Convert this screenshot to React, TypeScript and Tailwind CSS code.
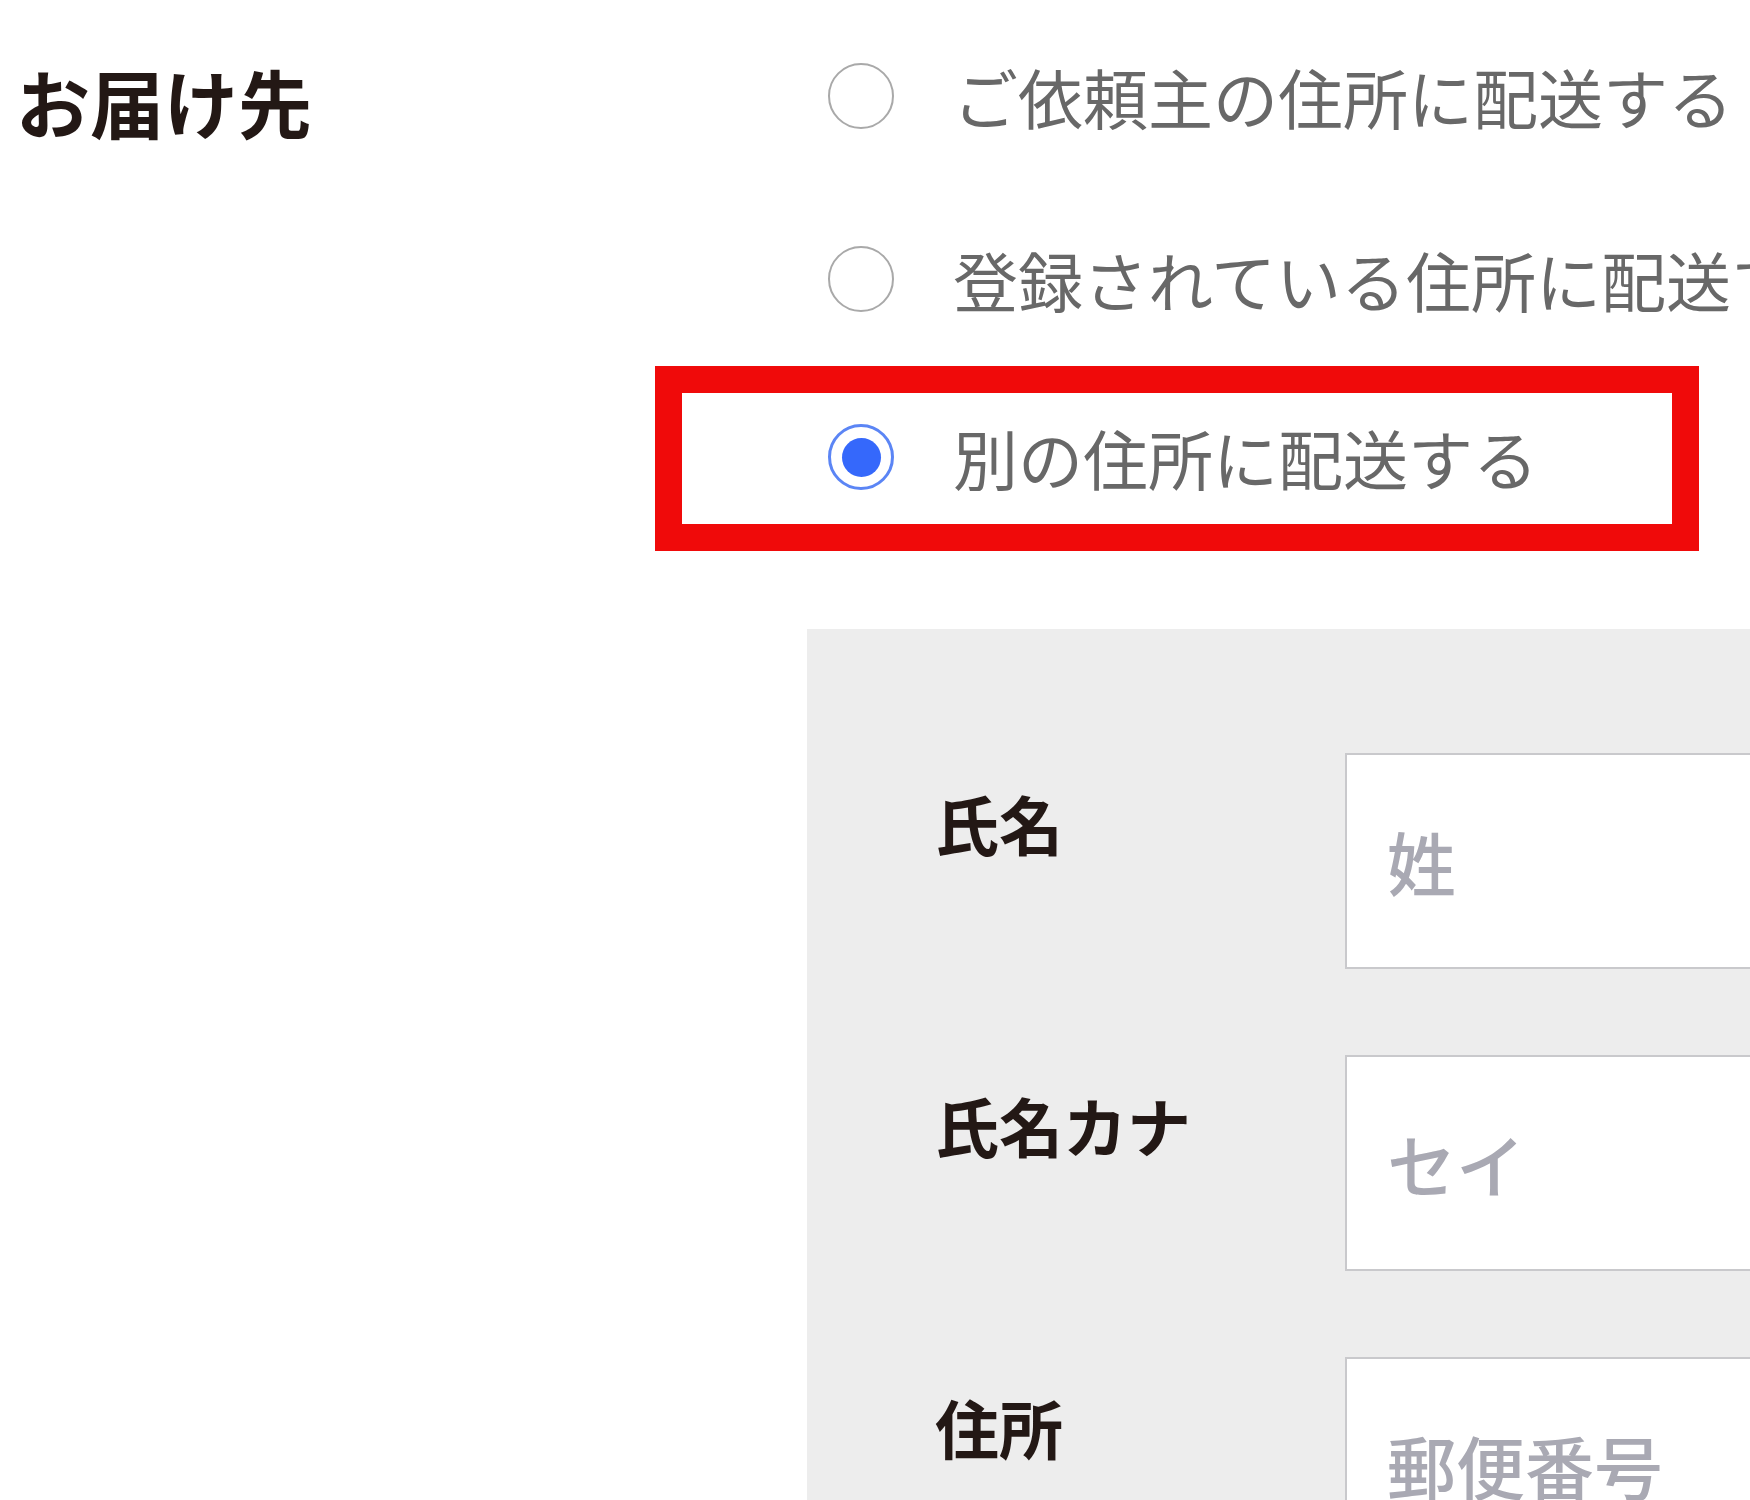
import React from "react";

const font = "font-['Noto_Sans_CJK_JP','Noto_Sans',sans-serif]";

function Radio({ checked }: { checked?: boolean }) {
  if (checked) {
    return (
      <div className="w-[66px] h-[66px] shrink-0 rounded-full border-[3px] border-[#5b85f5] bg-white flex items-center justify-center">
        <div className="w-[39px] h-[39px] rounded-full bg-[#3568fb]" />
      </div>
    );
  }
  return <div className="w-[66px] h-[66px] shrink-0 rounded-full border-2 border-[#a9a9a9] bg-white" />;
}

function Option({ label, checked, className }: { label: string; checked?: boolean; className?: string }) {
  return (
    <div className={"relative flex items-center h-[66px] " + (className ?? "")}>
      {checked && (
        <div className="absolute left-[-173px] top-[-58px] w-[1044px] h-[185px] border-[27px] border-[#f00a0a] pointer-events-none" />
      )}
      <Radio checked={checked} />
      <span className="ml-[59px] whitespace-nowrap text-[65px] leading-none font-normal text-[#686868]">{label}</span>
    </div>
  );
}

function Field({ label, placeholder, className }: { label: string; placeholder: string; className?: string }) {
  return (
    <div className={"flex " + (className ?? "")}>
      <div className="w-[410px] shrink-0 pt-[37px] text-[64px] leading-none font-bold text-[#231815] whitespace-nowrap">
        {label}
      </div>
      <input
        type="text"
        placeholder={placeholder}
        className={"w-[700px] h-[216px] shrink-0 bg-white border-2 border-[#c9c9cc] pl-[40px] text-[69px] font-medium outline-none placeholder:text-[#a9a9b3] " + font}
      />
    </div>
  );
}

export default function App() {
  return (
    <div className={"w-full h-[1500px] overflow-hidden bg-white " + font}>
      <div className="flex w-[2100px]">
        <div className="w-[807px] shrink-0 pl-[16px] pt-[64px]">
          <h2 className="text-[74px] leading-none font-bold text-[#231815] whitespace-nowrap">お届け先</h2>
        </div>
        <div className="w-[1290px] shrink-0 flex flex-col">
          <div className="pl-[21px] flex flex-col">
            <Option label="ご依頼主の住所に配送する" className="mt-[63px]" />
            <Option label="登録されている住所に配送する" className="mt-[117px]" />
            <Option label="別の住所に配送する" checked className="mt-[112px]" />
          </div>
          <div className="mt-[139px] bg-[#ededed] pl-[128px] pt-[124px] pb-[200px] flex flex-col gap-[86px]">
            <Field label="氏名" placeholder="姓" />
            <Field label="氏名カナ" placeholder="セイ" />
            <Field label="住所" placeholder="郵便番号" />
          </div>
        </div>
      </div>
    </div>
  );
}
